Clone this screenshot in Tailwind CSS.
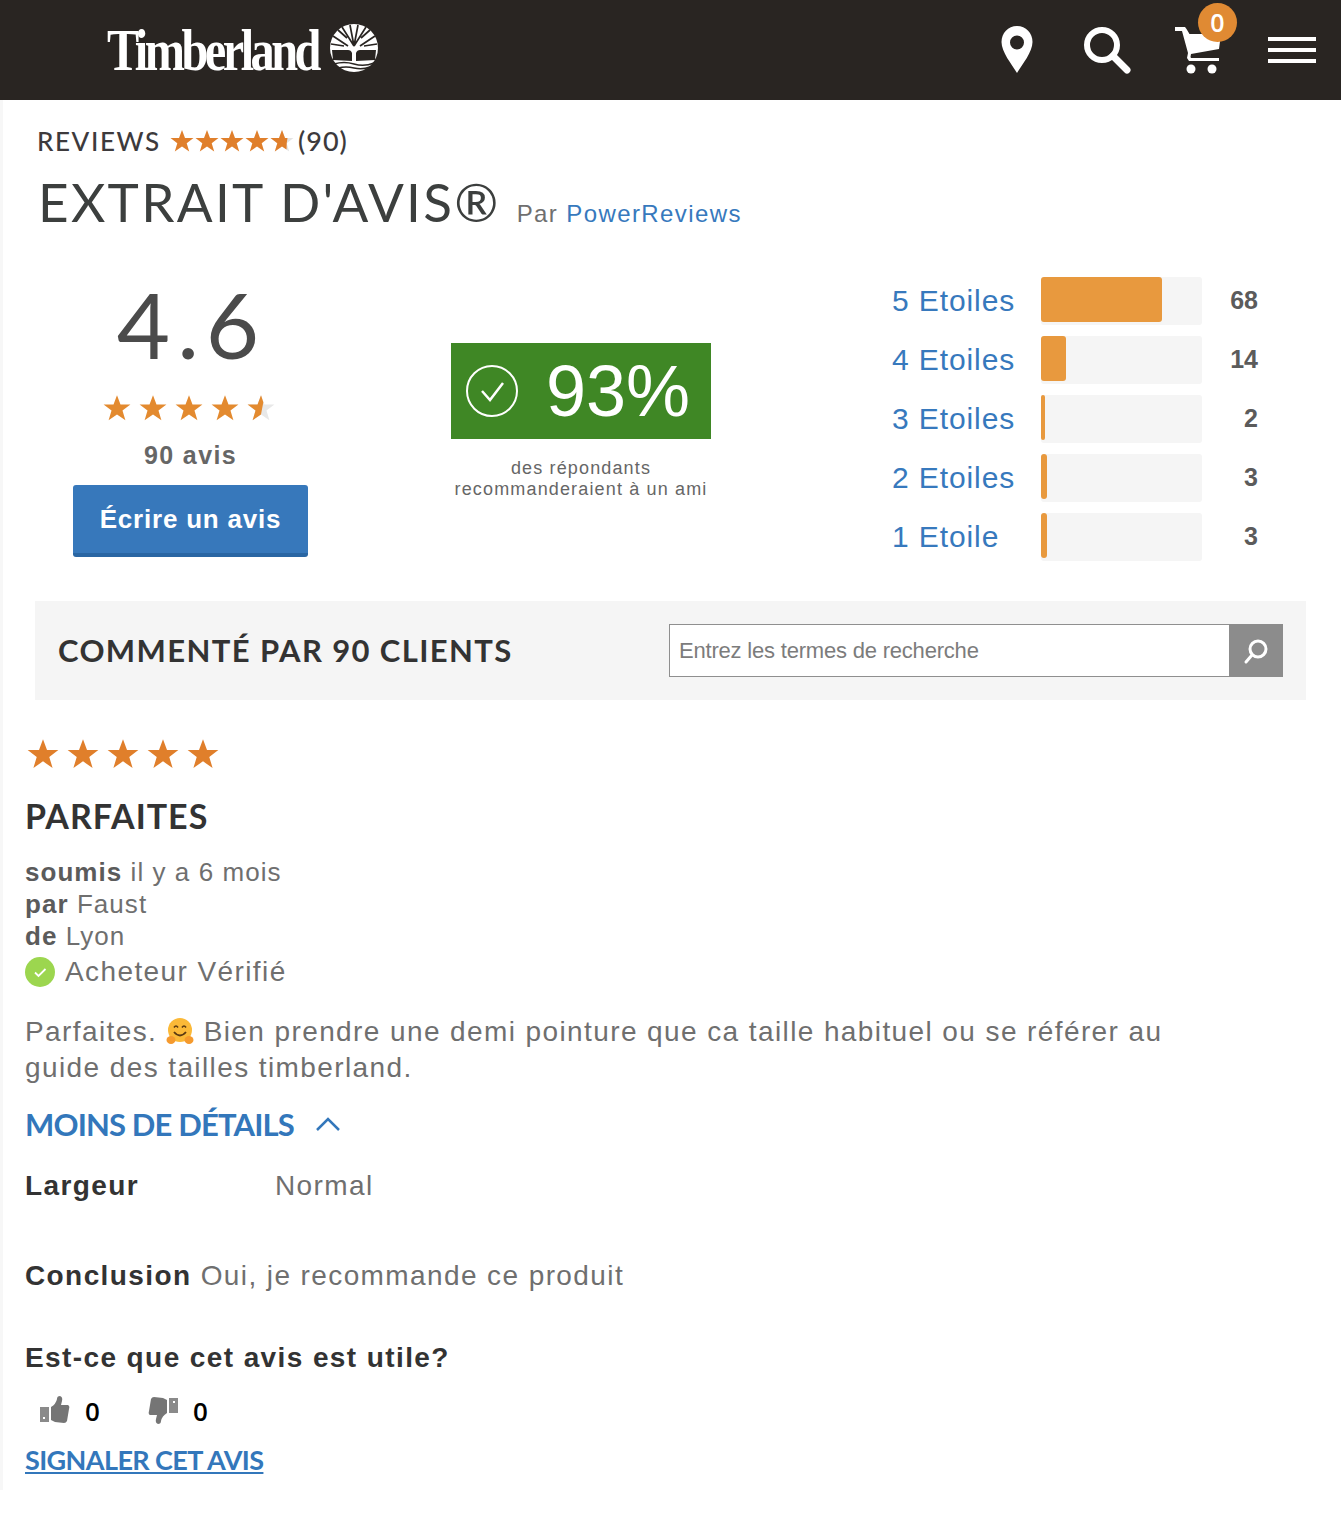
<!DOCTYPE html>
<html lang="fr">
<head>
<meta charset="utf-8">
<title>Avis</title>
<script src="https://cdn.jsdelivr.net/npm/@tailwindcss/browser@4"></script>
</head>
<body class="bg-white font-['Liberation_Sans',sans-serif] text-[#6f6f6f] overflow-hidden">
<div class="w-[1341px] h-[1514px] overflow-hidden">
  <header class="h-[100px] bg-[#292522] flex items-center pl-[107px] pr-[25px]">
    <div class="flex items-center">
      <span class="block w-[223px] font-['Liberation_Serif',serif] font-bold text-white text-[60px] leading-none tracking-[-4.400px] scale-x-[.806] origin-left whitespace-nowrap">Timberland</span>
      <svg class="mt-[-4px]" width="48" height="48" viewBox="0 0 48 48" fill="none">
        <circle cx="24" cy="24" r="24" fill="#fff"/>
        <path d="M24 22L12 3M24 22L20 1M24 22L28 1M24 22L36 3M18 22L3 12M30 22L45 12M14 22L1 20M34 22L47 20M17 14L8 6M31 14L40 6" stroke="#292522" stroke-width="1.700"/>
        <path d="M2 26h16q3 0 4 3v8l-19-1zM46 26H30q-3 0-4 3v8l19-1z" fill="#292522"/>
        <path d="M4 40q10-3 20 0t20-1M8 44q8-2 16 0t16-1" stroke="#292522" stroke-width="1.400"/>
      </svg>
    </div>
    <div class="ml-auto flex items-center">
      <svg width="34" height="50" viewBox="0 0 34 50" class="mr-[48px]"><path fill-rule="evenodd" fill="#fff" d="M17 1C8 1 1.500 8 1.500 17c0 10 10 22 15.500 31 5.500-9 15.500-21 15.500-31C32.500 8 26 1 17 1zm0 9.500a7 7 0 1 1 0 14 7 7 0 0 1 0-14z"/></svg>
      <svg width="50" height="50" viewBox="0 0 50 50" class="mr-[43px]" fill="none" stroke="#fff"><circle cx="20" cy="20" r="15" stroke-width="6"/><path d="M31 31l14 14" stroke-width="7" stroke-linecap="round"/></svg>
      <div class="relative w-[48px] h-[50px] mr-[45px]">
        <svg width="48" height="50" viewBox="0 0 48 50"><path fill="#fff" d="M0 2h10l1.500 2 3 5H46l-2 15-28 5-.5 3 .5 1h28v3H14l-2-3 1-5L7 6H0z"/><circle cx="16" cy="44" r="4.500" fill="#fff"/><circle cx="37" cy="44" r="4.500" fill="#fff"/></svg>
        <span class="absolute left-[23px] top-[-22px] w-[39px] h-[39px] rounded-full bg-[#e08a33] text-white text-[25px] font-semibold flex items-center justify-center font-['Open_Sans',sans-serif]">0</span>
      </div>
      <div class="flex flex-col gap-[7px]">
        <span class="block w-[48px] h-[4px] bg-white"></span>
        <span class="block w-[48px] h-[4px] bg-white"></span>
        <span class="block w-[48px] h-[4px] bg-white"></span>
      </div>
    </div>
  </header>

  <main class="border-l-[3px] border-[#f7f7f7] h-[1390px]">
    <div class="pl-[34px] pt-[25px]">
      <div class="flex items-center h-[32px] font-[Lato,sans-serif] font-medium text-[#3d3a3c] text-[27px]">
        <span class="tracking-[1.600px] text-[26px] w-[133px]">REVIEWS</span>
        <span class="flex gap-[1px]">
          <svg width="24" height="24" viewBox="0 0 24 24"><polygon fill="#e07f2b" points="12,1 15,9 23.500,9 16.700,14.200 19.200,22.500 12,17.500 4.800,22.500 7.300,14.200 0.500,9 9,9"/></svg>
          <svg width="24" height="24" viewBox="0 0 24 24"><polygon fill="#e07f2b" points="12,1 15,9 23.500,9 16.700,14.200 19.200,22.500 12,17.500 4.800,22.500 7.300,14.200 0.500,9 9,9"/></svg>
          <svg width="24" height="24" viewBox="0 0 24 24"><polygon fill="#e07f2b" points="12,1 15,9 23.500,9 16.700,14.200 19.200,22.500 12,17.500 4.800,22.500 7.300,14.200 0.500,9 9,9"/></svg>
          <svg width="24" height="24" viewBox="0 0 24 24"><polygon fill="#e07f2b" points="12,1 15,9 23.500,9 16.700,14.200 19.200,22.500 12,17.500 4.800,22.500 7.300,14.200 0.500,9 9,9"/></svg>
          <svg width="24" height="24" viewBox="0 0 24 24"><polygon fill="#e4e4e4" points="12,1 15,9 23.500,9 16.700,14.200 19.200,22.500 12,17.500 4.800,22.500 7.300,14.200 0.500,9 9,9"/><polygon fill="#e07f2b" points="12,1 15,9 17.500,9 16.700,14.200 16.500,20.500 12,17.500 4.800,22.500 7.300,14.200 0.500,9 9,9"/></svg>
        </span>
        <span class="ml-[4px] tracking-[1px]">(90)</span>
      </div>
      <div class="flex items-baseline mt-[16px] h-[58px]">
        <h1 class="font-[Lato,sans-serif] font-normal text-[53px] leading-[58px] tracking-[2.300px] text-[#3c3f3e] pl-[1px]">EXTRAIT D'AVIS®</h1>
        <span class="ml-[16px] text-[24px] tracking-[1.400px] text-[#6f6f6f]">Par <span class="text-[#3779bd]">PowerReviews</span></span>
      </div>
    </div>

    <section class="flex h-[329px] mt-[41px]">
      <div class="w-[305px] pl-[70px] flex flex-col items-start shrink-0">
        <div class="w-[235px] flex flex-col items-center">
          <div class="font-[Lato,sans-serif] text-[92px] leading-[92px] tracking-[7px] text-[#4b4b4b] mt-[6px] ml-[2px]">4.6</div>
          <div class="flex gap-[8px] mt-[24px] -ml-[4px]">
            <svg width="28" height="28" viewBox="0 0 24 24"><polygon fill="#e38a2f" points="12,1 15,9 23.500,9 16.700,14.200 19.200,22.500 12,17.500 4.800,22.500 7.300,14.200 0.500,9 9,9"/></svg>
            <svg width="28" height="28" viewBox="0 0 24 24"><polygon fill="#e38a2f" points="12,1 15,9 23.500,9 16.700,14.200 19.200,22.500 12,17.500 4.800,22.500 7.300,14.200 0.500,9 9,9"/></svg>
            <svg width="28" height="28" viewBox="0 0 24 24"><polygon fill="#e38a2f" points="12,1 15,9 23.500,9 16.700,14.200 19.200,22.500 12,17.500 4.800,22.500 7.300,14.200 0.500,9 9,9"/></svg>
            <svg width="28" height="28" viewBox="0 0 24 24"><polygon fill="#e38a2f" points="12,1 15,9 23.500,9 16.700,14.200 19.200,22.500 12,17.500 4.800,22.500 7.300,14.200 0.500,9 9,9"/></svg>
            <svg width="28" height="28" viewBox="0 0 24 24"><polygon fill="#e8e8e8" points="12,1 15,9 23.500,9 16.700,14.200 19.200,22.500 12,17.500 4.800,22.500 7.300,14.200 0.500,9 9,9"/><polygon fill="#e38a2f" points="12,1 14,7 12,17.500 4.800,22.500 7.300,14.200 0.500,9 9,9"/></svg>
          </div>
          <div class="mt-[18px] text-[25px] leading-[30px] font-bold tracking-[1.400px] text-[#666]">90 avis</div>
          <button class="mt-[15px] w-[235px] h-[72px] rounded-[3px] bg-[#3778bb] border-b-[4px] border-[#2a66a3] text-white text-[26px] font-bold tracking-[.8px]">Écrire un avis</button>
        </div>
      </div>

      <div class="ml-[143px] w-[260px] pt-[71px] flex flex-col items-center shrink-0">
        <div class="w-[260px] h-[96px] bg-[#3f8725] flex items-center pl-[15px]">
          <svg width="54" height="54" viewBox="0 0 54 54" fill="none" stroke="#fff" stroke-width="2"><circle cx="26" cy="27" r="25"/><path d="M16 27l8 9 13-17" stroke-width="2.500"/></svg>
          <span class="ml-[26px] text-[72px] leading-none text-white">93%</span>
        </div>
        <div class="mt-[19px] text-[18px] leading-[21px] tracking-[1.150px] text-center text-[#666] whitespace-nowrap">des répondants<br>recommanderaient à un ami</div>
      </div>

      <div class="ml-[181px] w-[370px] flex flex-col gap-[11px] pt-[5px] shrink-0">
        <div class="flex items-center h-[48px]">
          <span class="w-[149px] -mt-[2px] text-[30px] tracking-[.9px] text-[#3779bd]">5 Etoiles</span>
          <div class="w-[161px] h-[48px] bg-[#f5f5f5] rounded-[3px]"><div class="h-[45px] w-[121px] bg-[#e8993e] rounded-[3px]"></div></div>
          <span class="w-[56px] text-right text-[25px] font-bold text-[#5b5b5b]">68</span>
        </div>
        <div class="flex items-center h-[48px]">
          <span class="w-[149px] -mt-[2px] text-[30px] tracking-[.9px] text-[#3779bd]">4 Etoiles</span>
          <div class="w-[161px] h-[48px] bg-[#f5f5f5] rounded-[3px]"><div class="h-[45px] w-[25px] bg-[#e8993e] rounded-[3px]"></div></div>
          <span class="w-[56px] text-right text-[25px] font-bold text-[#5b5b5b]">14</span>
        </div>
        <div class="flex items-center h-[48px]">
          <span class="w-[149px] -mt-[2px] text-[30px] tracking-[.9px] text-[#3779bd]">3 Etoiles</span>
          <div class="w-[161px] h-[48px] bg-[#f5f5f5] rounded-[3px]"><div class="h-[45px] w-[4px] bg-[#e8993e] rounded-[3px]"></div></div>
          <span class="w-[56px] text-right text-[25px] font-bold text-[#5b5b5b]">2</span>
        </div>
        <div class="flex items-center h-[48px]">
          <span class="w-[149px] -mt-[2px] text-[30px] tracking-[.9px] text-[#3779bd]">2 Etoiles</span>
          <div class="w-[161px] h-[48px] bg-[#f5f5f5] rounded-[3px]"><div class="h-[45px] w-[6px] bg-[#e8993e] rounded-[3px]"></div></div>
          <span class="w-[56px] text-right text-[25px] font-bold text-[#5b5b5b]">3</span>
        </div>
        <div class="flex items-center h-[48px]">
          <span class="w-[149px] -mt-[2px] text-[30px] tracking-[.9px] text-[#3779bd]">1 Etoile</span>
          <div class="w-[161px] h-[48px] bg-[#f5f5f5] rounded-[3px]"><div class="h-[45px] w-[6px] bg-[#e8993e] rounded-[3px]"></div></div>
          <span class="w-[56px] text-right text-[25px] font-bold text-[#5b5b5b]">3</span>
        </div>
      </div>
    </section>

    <section class="ml-[32px] w-[1271px] h-[99px] bg-[#f5f5f5] flex items-center pl-[23px] pr-[23px]">
      <h2 class="font-[Lato,sans-serif] font-bold text-[31px] tracking-[1.400px] text-[#333]">COMMENTÉ PAR 90 CLIENTS</h2>
      <div class="ml-auto flex w-[614px] h-[53px] bg-white border border-[#8f8f8f]">
        <div class="flex-1 pl-[9px] flex items-center text-[22px] tracking-[-.2px] text-[#7c7c7c]">Entrez les termes de recherche</div>
        <div class="w-[54px] -my-px -mr-px bg-[#8c8c8c] flex items-center justify-center">
          <svg width="28" height="28" viewBox="0 0 28 28" fill="none" stroke="#fff" stroke-width="3"><circle cx="16" cy="12" r="8"/><path d="M10 18l-6 7" stroke-linecap="round"/></svg>
        </div>
      </div>
    </section>

    <section class="pl-[22px] pt-[38px]">
      <div class="flex gap-[8px] pl-[2px]">
        <svg width="32" height="32" viewBox="0 0 24 24"><polygon fill="#e07f2b" points="12,1 15,9 23.500,9 16.700,14.200 19.200,22.500 12,17.500 4.800,22.500 7.300,14.200 0.500,9 9,9"/></svg>
        <svg width="32" height="32" viewBox="0 0 24 24"><polygon fill="#e07f2b" points="12,1 15,9 23.500,9 16.700,14.200 19.200,22.500 12,17.500 4.800,22.500 7.300,14.200 0.500,9 9,9"/></svg>
        <svg width="32" height="32" viewBox="0 0 24 24"><polygon fill="#e07f2b" points="12,1 15,9 23.500,9 16.700,14.200 19.200,22.500 12,17.500 4.800,22.500 7.300,14.200 0.500,9 9,9"/></svg>
        <svg width="32" height="32" viewBox="0 0 24 24"><polygon fill="#e07f2b" points="12,1 15,9 23.500,9 16.700,14.200 19.200,22.500 12,17.500 4.800,22.500 7.300,14.200 0.500,9 9,9"/></svg>
        <svg width="32" height="32" viewBox="0 0 24 24"><polygon fill="#e07f2b" points="12,1 15,9 23.500,9 16.700,14.200 19.200,22.500 12,17.500 4.800,22.500 7.300,14.200 0.500,9 9,9"/></svg>
      </div>
      <h3 class="mt-[24px] font-[Lato,sans-serif] font-bold text-[34px] leading-[44px] tracking-[1px] text-[#333]">PARFAITES</h3>
      <div class="mt-[18px] text-[26px] leading-[32px] tracking-[1.050px]">
        <div><b class="text-[#5b5b5b]">soumis</b> il y a 6 mois</div>
        <div><b class="text-[#5b5b5b]">par</b> Faust</div>
        <div><b class="text-[#5b5b5b]">de</b> Lyon</div>
        <div class="flex items-center h-[38px] mt-[1px] text-[28px] tracking-[1.400px]">
          <svg width="30" height="30" viewBox="0 0 30 30" class="mr-[10px]"><circle cx="15" cy="15" r="15" fill="#9cd64f"/><path d="M10 15.500l3.500 3.500 7-7" fill="none" stroke="#fff" stroke-width="1.800"/></svg>
          Acheteur Vérifié
        </div>
      </div>
      <p class="mt-[23px] w-[1200px] text-[28px] leading-[36px] tracking-[1.400px]">Parfaites. <svg class="inline-block align-[-5px]" width="28" height="28" viewBox="0 0 28 28"><circle cx="14" cy="12" r="12" fill="#fbb938"/><path d="M8 9.500q2-3 4 0M16 9.500q2-3 4 0" fill="none" stroke="#5b3a12" stroke-width="1.600"/><path d="M8 14q6 7 12 0" fill="none" stroke="#5b3a12" stroke-width="1.800"/><ellipse cx="5" cy="22" rx="4.500" ry="4" fill="#f59a2e"/><ellipse cx="23" cy="22" rx="4.500" ry="4" fill="#f59a2e"/></svg> Bien prendre une demi pointure que ca taille habituel ou se référer au guide des tailles timberland.</p>
      <div class="mt-[19px] flex items-center h-[38px] font-[Lato,sans-serif] font-bold text-[31px] tracking-[-.85px] text-[#3377bb]">
        MOINS DE DÉTAILS
        <svg class="ml-[22px]" width="24" height="16" viewBox="0 0 24 16" fill="none" stroke="#3377bb" stroke-width="2.500"><path d="M1 14L12 3l11 11"/></svg>
      </div>
      <div class="mt-[25px] flex text-[28px] leading-[36px] tracking-[1.400px] h-[36px]">
        <b class="w-[250px] text-[#333]">Largeur</b><span>Normal</span>
      </div>
      <div class="mt-[54px] text-[28px] leading-[36px] tracking-[1.400px]"><b class="text-[#333]">Conclusion</b> Oui, je recommande ce produit</div>
      <div class="mt-[46px] text-[28px] leading-[36px] tracking-[1.400px] font-bold text-[#333]">Est-ce que cet avis est utile?</div>
      <div class="mt-[17px] flex items-center h-[36px] pl-[15px] text-[26px] font-semibold text-black font-['Open_Sans',sans-serif]">
        <svg width="30" height="30" viewBox="0 0 30 30" fill="#757575"><path fill-rule="evenodd" d="M0 11h9v15H0zM3 21v2h2v-2z" fill="#8a8a8a"/><path d="M11 11q5-3 6-8 0-3 3-3 3 1 2 5l-1 4h7q2 1 1 4l-2 12q-1 2-3 2l-9-1-4-2z"/></svg>
        <span class="ml-[15px] w-[63px]">0</span>
        <svg width="30" height="30" viewBox="0 0 30 30" fill="#757575"><path fill-rule="evenodd" d="M21 2h9v15h-9zM25 5v2h2V5z" fill="#8a8a8a"/><path d="M19 17q-5 3-6 8 0 3-3 3-3-1-2-5l1-4H2q-2-1-1-4L3 3q1-2 3-2l9 1 4 2z"/></svg>
        <span class="ml-[15px]">0</span>
      </div>
      <a class="block mt-[14px] font-[Lato,sans-serif] font-bold text-[27px] leading-[34px] tracking-[-.6px] text-[#3377bb] underline">SIGNALER CET AVIS</a>
    </section>
  </main>
</div>
</body>
</html>
